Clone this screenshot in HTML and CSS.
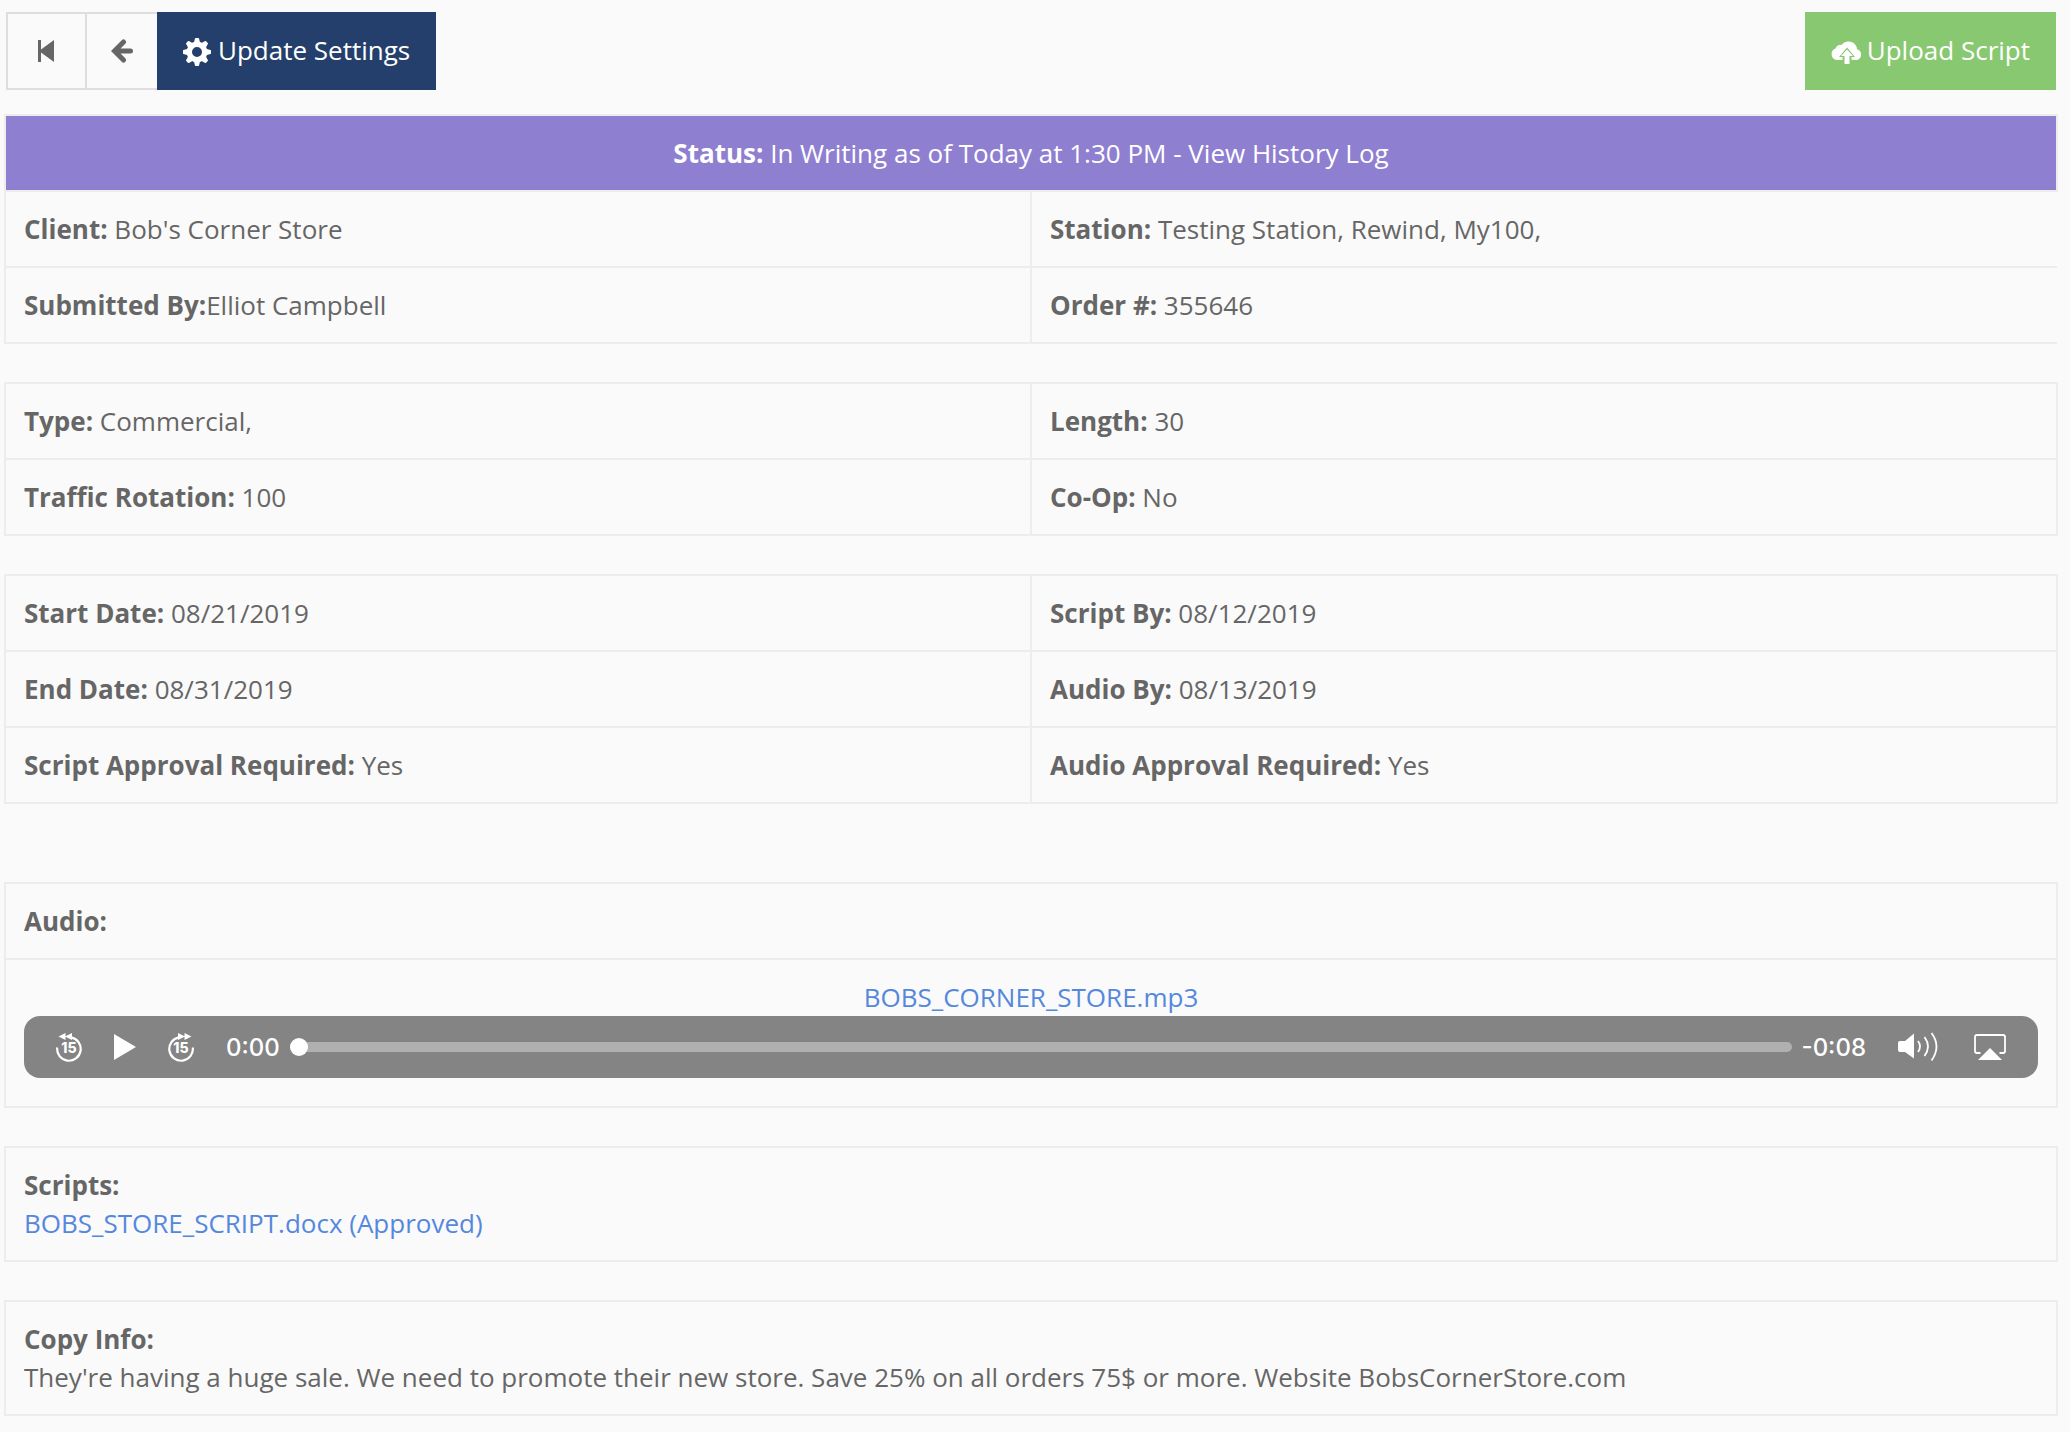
FILE: index.html
```html
<!DOCTYPE html>
<html lang="en">
<head>
  <meta charset="UTF-8" />
  <meta name="viewport" content="width=device-width, initial-scale=1" />
  <title>Bob's Corner Store - Order 355646</title>
  <link rel="stylesheet" href="styles.css">
</head>
<body>

  <div class="toolbar">
    <div class="btn-group">
      <button class="btn btn-first" aria-label="First">
        <svg width="18" height="22" viewBox="0 0 18 22"><path d="M1 0h3v9.500L17 0v22L4 12.500V22H1z"/></svg>
      </button>
      <button class="btn btn-back" aria-label="Back">
        <svg width="22" height="24" viewBox="0 0 22 24"><path d="M12.500 3 3.500 12l9 9M5 12h14.500" fill="none" stroke="currentColor" stroke-width="5" stroke-linecap="round"/></svg>
      </button>
      <button class="btn btn-settings">
        <svg width="28" height="28" viewBox="0 0 28 28">
          <circle cx="14" cy="14" r="7.700" fill="none" stroke="currentColor" stroke-width="5.400"/>
          <path id="teeth" d="M10.800 5 12 .5q.1-.5.5-.5h3q.4 0 .5.500L17.200 5zM10.800 23l1.200 4.500q.1.500.5.500h3q.4 0 .5-.500L17.200 23z"/>
          <use href="#teeth" transform="rotate(45 14 14)"/>
          <use href="#teeth" transform="rotate(90 14 14)"/>
          <use href="#teeth" transform="rotate(135 14 14)"/>
        </svg>
        Update Settings
      </button>
    </div>
    <button class="btn btn-upload">
      <svg width="32" height="24" viewBox="0 0 32 24"><path d="M6 20a6 6 0 0 1-1.500-11.600A5 5 0 0 1 10.500 5 8.600 8.600 0 0 1 26 9.200 5.600 5.600 0 0 1 26 20h-5.500v-3H24L16 7.500 8 17h3.500v3z"/><path d="M16 9.500 22 16h-3.500v8h-5v-8H10z"/></svg>
      Upload Script
    </button>
  </div>

  <table class="info open-right">
    <tr><td class="status" colspan="2"><strong>Status:</strong> In Writing as of Today at 1:30 PM - <a href="#">View History Log</a></td></tr>
    <tr><td><strong>Client:</strong> Bob's Corner Store</td><td><strong>Station:</strong> Testing Station, Rewind, My100,</td></tr>
    <tr><td><strong>Submitted By:</strong>Elliot Campbell</td><td><strong>Order #:</strong> 355646</td></tr>
  </table>

  <table class="info">
    <tr><td><strong>Type:</strong> Commercial,</td><td><strong>Length:</strong> 30</td></tr>
    <tr><td><strong>Traffic Rotation:</strong> 100</td><td><strong>Co-Op:</strong> No</td></tr>
  </table>

  <table class="info dates">
    <tr><td><strong>Start Date:</strong> 08/21/2019</td><td><strong>Script By:</strong> 08/12/2019</td></tr>
    <tr><td><strong>End Date:</strong> 08/31/2019</td><td><strong>Audio By:</strong> 08/13/2019</td></tr>
    <tr><td><strong>Script Approval Required:</strong> Yes</td><td><strong>Audio Approval Required:</strong> Yes</td></tr>
  </table>

  <table class="info">
    <tr><td><strong>Audio:</strong></td></tr>
    <tr>
      <td class="audio">
        <a href="#">BOBS_CORNER_STORE.mp3</a>
        <div class="player">
          <button aria-label="Back 15 seconds">
            <svg width="26" height="30" viewBox="0 0 26 30">
              <path d="M1.200 15.500A11.800 11.800 0 1 0 15 5.300" fill="none" stroke="currentColor" stroke-width="2.200"/>
              <path d="M2.500 4.500 9.500 1v7zM9 4.500 16 1v7z"/>
              <text x="13" y="21">15</text>
            </svg>
          </button>
          <button aria-label="Play">
            <svg width="22" height="26" viewBox="0 0 22 26"><path d="M0 0l22 13L0 26z"/></svg>
          </button>
          <button aria-label="Forward 15 seconds">
            <svg width="26" height="30" viewBox="0 0 26 30">
              <path d="M24.800 15.500A11.800 11.800 0 1 1 11 5.300" fill="none" stroke="currentColor" stroke-width="2.200"/>
              <path d="M23.500 4.500 16.500 1v7zM17 4.500 10 1v7z"/>
              <text x="13" y="21">15</text>
            </svg>
          </button>
          <div class="timeline">
            <span>0:00</span>
            <input type="range" min="0" max="8" value="0" aria-label="Position" />
            <span>-0:08</span>
          </div>
          <div class="outputs">
            <button aria-label="Mute">
              <svg width="40" height="30" viewBox="0 0 40 30">
                <path d="M2 9h5l9-7.500v25L7 20H2q-2 0-2-2v-7q0-2 2-2z"/>
                <path d="M20 9q4 5.500 0 11M26.500 5q7 9.500 0 19M33.500 1q10 13.500 0 27.500" fill="none" stroke="currentColor" stroke-width="1.800"/>
              </svg>
            </button>
            <button aria-label="AirPlay">
              <svg width="32" height="26" viewBox="0 0 32 26">
                <path d="M6.500 19H3q-2 0-2-2V3q0-2 2-2h26q2 0 2 2v14q0 2-2 2h-3.500" fill="none" stroke="currentColor" stroke-width="1.800"/>
                <path d="M16 14l12 12H4z"/>
              </svg>
            </button>
          </div>
        </div>
      </td>
    </tr>
  </table>

  <table class="info">
    <tr><td><strong>Scripts:</strong><br><a href="#">BOBS_STORE_SCRIPT.docx (Approved)</a></td></tr>
  </table>

  <table class="info">
    <tr><td><strong>Copy Info:</strong><br>They're having a huge sale. We need to promote their new store. Save 25% on all orders 75$ or more. Website BobsCornerStore.com</td></tr>
  </table>

</body>
</html>
```
FILE: styles.css
```css
:root {
  --bg: #fafafa;
  --text: #666;
  --line: #ededed;
  --navy: #243f6b;
  --green: #88c871;
  --purple: #8f7fd0;
  --link: #5588dd;
  --player: #848484;
}

* {
  box-sizing: border-box;
}

body {
  margin: 0;
  padding: 12px 12px 0 4px;
  background: var(--bg);
  color: var(--text);
  font-family: "Open Sans", sans-serif;
  font-size: 26px;
  line-height: 38px;
}

a {
  color: var(--link);
  text-decoration: none;
}

button {
  border: none;
  background: none;
  color: inherit;
  font: inherit;
  cursor: pointer;
}

svg {
  display: block;
  fill: currentColor;
}

.toolbar {
  display: flex;
  justify-content: space-between;
  margin: 0 2px 24px;
}

.btn-group {
  display: flex;
}

.btn {
  display: flex;
  align-items: center;
  height: 78px;
  padding: 0 26px 2px;
}

.btn-settings svg,
.btn-upload svg {
  margin-top: 3px;
}

.btn-first,
.btn-back {
  border: 2px solid #dedede;
  border-right: none;
}

.btn-first {
  padding: 0 30px 0 29px;
}

.btn-back {
  padding: 0 24px;
}

.btn-settings {
  gap: 7px;
  background: var(--navy);
  color: white;
}

.btn-upload {
  gap: 4px;
  background: var(--green);
  color: white;
}

.info {
  width: 100%;
  margin-bottom: 38px;
  border-collapse: collapse;
  table-layout: fixed;
}

.info td {
  padding: 18px;
  border: 2px solid var(--line);
}

.open-right td:last-child:not(.status) {
  border-right: none;
}

.dates {
  margin-bottom: 78px;
}

.info .status {
  background: var(--purple);
  color: white;
  text-align: center;
}

.status a {
  color: white;
}

.info .audio {
  padding-bottom: 28px;
  text-align: center;
}

.player {
  display: flex;
  align-items: center;
  gap: 32px;
  height: 62px;
  padding: 0 32px;
  border-radius: 16px;
  background: var(--player);
  color: white;
}

.player button {
  padding: 0;
}

.player text {
  font: 800 14px "Inter", sans-serif;
  text-anchor: middle;
}

.timeline {
  display: flex;
  flex: 1;
  align-items: center;
  gap: 10px;
  font: 500 24px "Inter", sans-serif;
}

.timeline input {
  flex: 1;
  height: 18px;
  margin: 0;
  appearance: none;
  background: none;
}

.timeline input::-webkit-slider-runnable-track {
  height: 10px;
  border-radius: 5px;
  background: #b0b0b0;
}

.timeline input::-webkit-slider-thumb {
  width: 18px;
  height: 18px;
  margin-top: -4px;
  appearance: none;
  border-radius: 50%;
  background: white;
}

.outputs {
  display: flex;
  align-items: center;
  gap: 36px;
}
```
